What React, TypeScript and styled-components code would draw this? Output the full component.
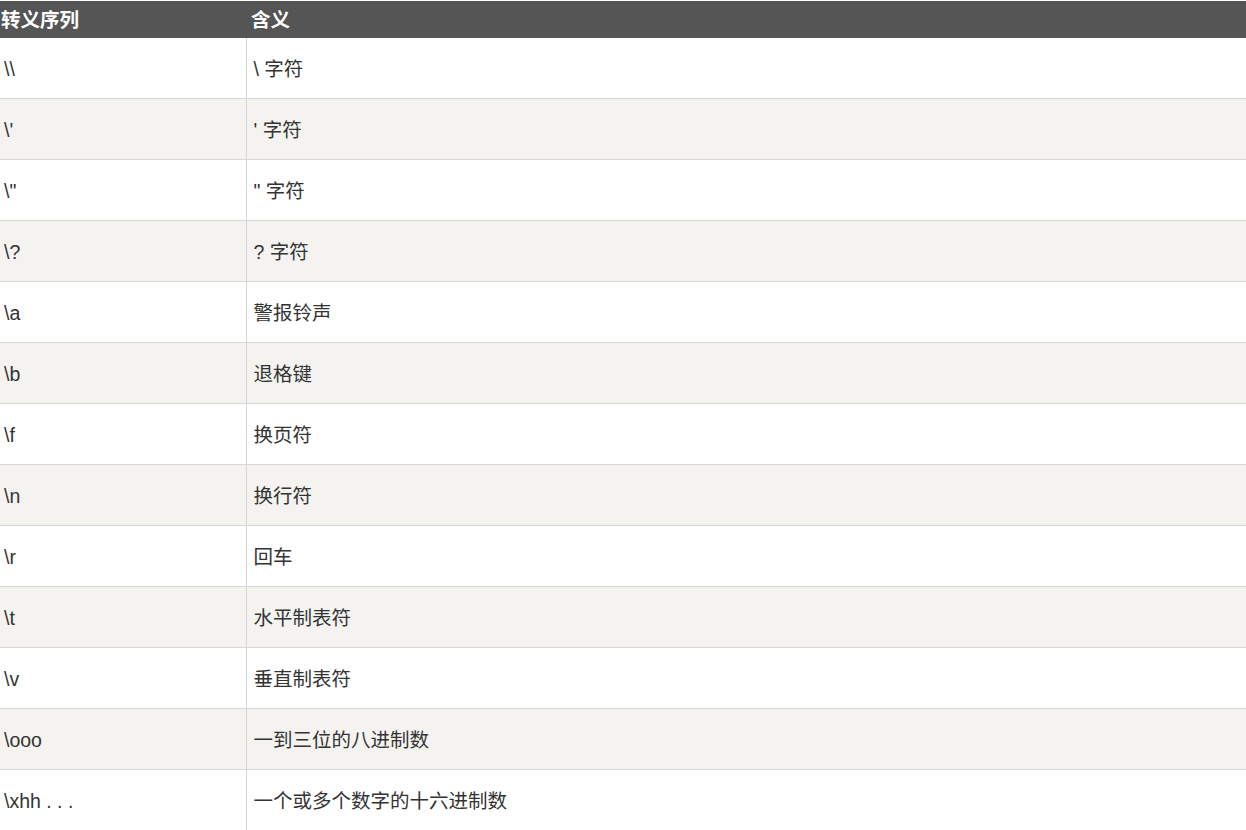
import React from "react";
import styled, { createGlobalStyle } from "styled-components";

const Global = createGlobalStyle`
  html, body { margin: 0; padding: 0; background: #fff; }
  body { padding-top: 1px; }
`;

const Table = styled.table`
  width: 100%;
  border-collapse: collapse;
  font-family: "Liberation Sans", Arial, "Noto Sans CJK SC", sans-serif;
  font-size: 19.5px;
  color: #333;
`;

const HeadCell = styled.th<{ $first?: boolean }>`
  background: #555555;
  color: #fff;
  font-weight: bold;
  text-align: left;
  height: 37px;
  padding: 1px 0 0 ${(p) => (p.$first ? "1px" : "5px")};
  width: ${(p) => (p.$first ? "246px" : "auto")};
  box-sizing: border-box;
  line-height: 22px;
  vertical-align: middle;
`;

const Row = styled.tr<{ $alt: boolean }>`
  background: ${(p) => (p.$alt ? "#f4f3f0" : "#ffffff")};
  border-top: 1px solid #d6d6d6;
  &:first-child { border-top: none; }
`;

const Cell = styled.td<{ $first?: boolean }>`
  height: 60px;
  padding: 2px 0 0 ${(p) => (p.$first ? "4px" : "7px")};
  border-right: ${(p) => (p.$first ? "1px solid #d6d6d6" : "none")};
  vertical-align: middle;
  line-height: 22px;
  box-sizing: content-box;
  height: 58px;
`;

const rows: [string, string][] = [
  ["\\\\", "\\ 字符"],
  ["\\'", "' 字符"],
  ['\\"', '" 字符'],
  ["\\?", "? 字符"],
  ["\\a", "警报铃声"],
  ["\\b", "退格键"],
  ["\\f", "换页符"],
  ["\\n", "换行符"],
  ["\\r", "回车"],
  ["\\t", "水平制表符"],
  ["\\v", "垂直制表符"],
  ["\\ooo", "一到三位的八进制数"],
  ["\\xhh . . .", "一个或多个数字的十六进制数"],
];

export default function App() {
  return (
    <>
      <Global />
      <Table>
        <thead>
          <tr>
            <HeadCell $first>转义序列</HeadCell>
            <HeadCell>含义</HeadCell>
          </tr>
        </thead>
        <tbody>
          {rows.map(([a, b], i) => (
            <Row key={i} $alt={i % 2 === 1}>
              <Cell $first>{a}</Cell>
              <Cell>{b}</Cell>
            </Row>
          ))}
        </tbody>
      </Table>
    </>
  );
}
